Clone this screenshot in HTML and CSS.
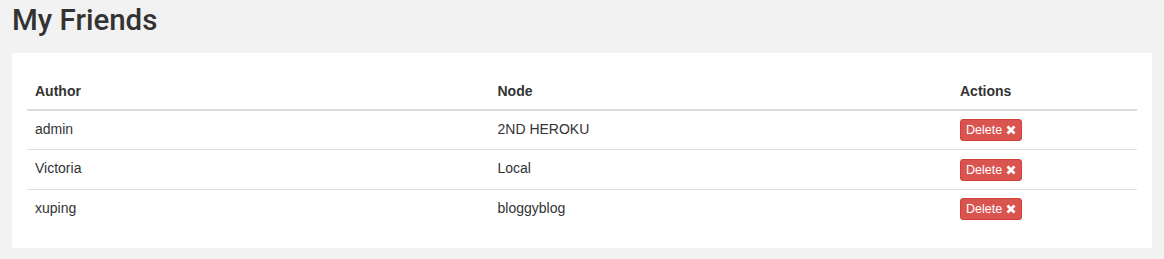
FILE: index.html
```html
<!DOCTYPE html>
<html lang="en">
    <head>
        <meta charset="utf-8">
        <title>My Friends</title>
        <link rel="stylesheet" href="styles.css">
    </head>
    <body>
    <div class="page">
        <h1 class="title">My Friends</h1>
        <div class="panel">
            <table class="friends">
                <thead>
                    <tr>
                        <th class="col-wide">Author</th>
                        <th class="col-wide">Node</th>
                        <th class="col-small">Actions</th>
                    </tr>
                </thead>
                <tbody>
                    <tr>
                        <td>admin</td>
                        <td>2ND HEROKU</td>
                        <td><button class="btn-delete" type="button">Delete <svg class="icon-x" viewBox="0 0 10 10"><path d="M1.5 1.5L8.5 8.5M8.5 1.5L1.5 8.5"/></svg></button></td>
                    </tr>
                    <tr>
                        <td>Victoria</td>
                        <td>Local</td>
                        <td><button class="btn-delete" type="button">Delete <svg class="icon-x" viewBox="0 0 10 10"><path d="M1.5 1.5L8.5 8.5M8.5 1.5L1.5 8.5"/></svg></button></td>
                    </tr>
                    <tr>
                        <td>xuping</td>
                        <td>bloggyblog</td>
                        <td><button class="btn-delete" type="button">Delete <svg class="icon-x" viewBox="0 0 10 10"><path d="M1.5 1.5L8.5 8.5M8.5 1.5L1.5 8.5"/></svg></button></td>
                    </tr>
                </tbody>
            </table>
        </div>
    </div>
    </body>
</html>
```

FILE: styles.css
```css
body{
    margin:0;
    background-color:#f2f2f2;
    font-family:"Liberation Sans",Arial,sans-serif;
    font-size:14px;
    color:#333;
}
.page{padding:5px 12px 12px;}
.title{
    margin:0 0 17px;
    font-family:Roboto,"Liberation Sans",sans-serif;
    font-weight:500;
    font-size:29.5px;
    line-height:31px;
    color:#333;
}
.panel{
    background-color:#fff;
    padding:20px 15px;
}
.friends{
    width:100%;
    border-collapse:collapse;
    border-spacing:0;
}
.friends th,.friends td{
    padding:8px;
    line-height:20px;
    text-align:left;
    vertical-align:top;
}
.friends th{
    font-weight:bold;
    border-bottom:2px solid #ddd;
}
.friends tbody tr+tr td{border-top:1px solid #ddd;}
.col-wide{width:41.6667%;}
.col-small{width:16.6667%;}
.btn-delete{
    display:inline-block;
    margin:0;
    padding:1px 5px;
    font-family:"Liberation Sans",Arial,sans-serif;
    font-size:12.5px;
    line-height:18px;
    color:#fff;
    background-color:#d9534f;
    border:1px solid #d43f3a;
    border-radius:3px;
    vertical-align:middle;
}
.icon-x{
    width:10px;
    height:10px;
    vertical-align:-1px;
    stroke:#fff;
    stroke-width:2.8;
    fill:none;
}
```
